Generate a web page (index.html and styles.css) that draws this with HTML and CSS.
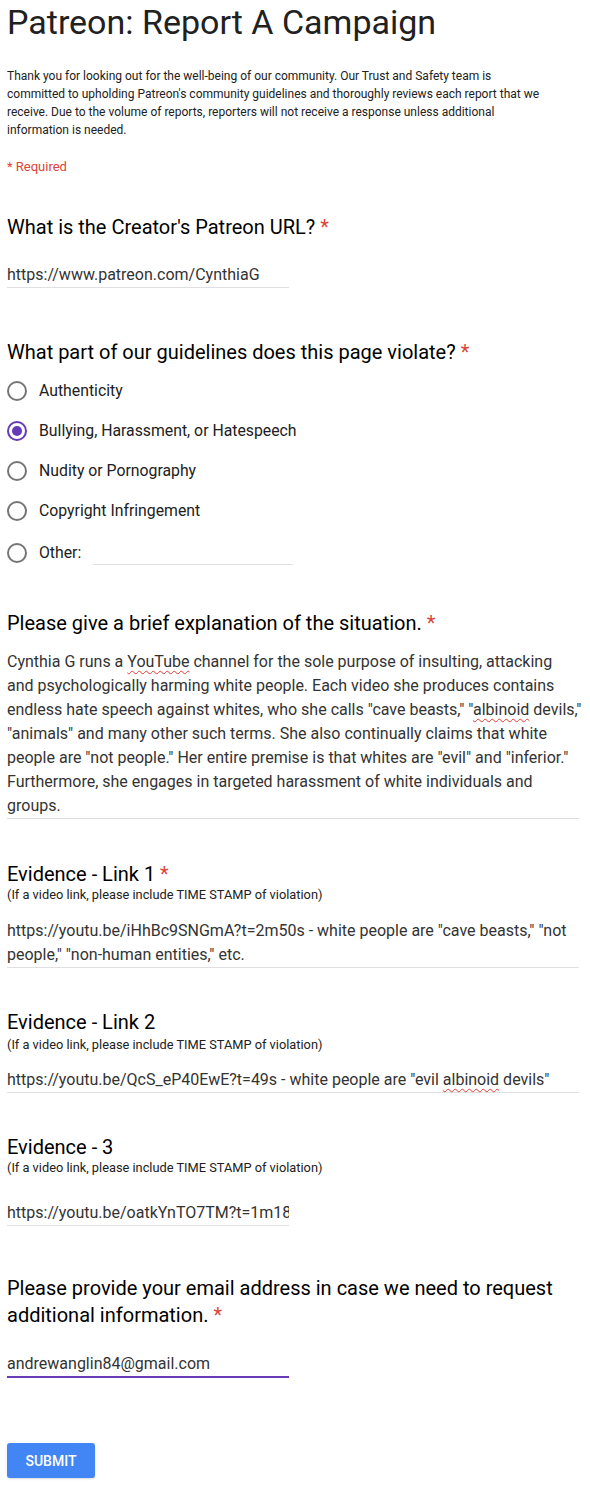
FILE: index.html
```html
<!DOCTYPE html>
<html>
<head>
<meta charset="utf-8">
<title>Patreon: Report A Campaign</title>
<link rel="stylesheet" href="styles.css">
</head>
<body>
<div class="form">
  <h1 class="title">Patreon: Report A Campaign</h1>
  <p class="desc">Thank you for looking out for the well-being of our community. Our Trust and Safety team is committed to upholding Patreon's community guidelines and thoroughly reviews each report that we receive. Due to the volume of reports, reporters will not receive a response unless additional information is needed.</p>
  <p class="required">* Required</p>

  <div class="q q1">
    <div class="qtitle">What is the Creator's Patreon URL? <span class="star">*</span></div>
    <div class="answer short">https://www.patreon.com/CynthiaG</div>
  </div>

  <div class="q q2">
    <div class="qtitle">What part of our guidelines does this page violate? <span class="star">*</span></div>
    <div class="options">
      <div class="opt"><span class="radio"></span><span class="label">Authenticity</span></div>
      <div class="opt"><span class="radio checked"></span><span class="label">Bullying, Harassment, or Hatespeech</span></div>
      <div class="opt"><span class="radio"></span><span class="label">Nudity or Pornography</span></div>
      <div class="opt"><span class="radio"></span><span class="label">Copyright Infringement</span></div>
      <div class="opt other"><span class="radio"></span><span class="label">Other:</span><span class="other-input"></span></div>
    </div>
  </div>

  <div class="q q3">
    <div class="qtitle">Please give a brief explanation of the situation. <span class="star">*</span></div>
    <div class="answer long"><div class="txt">Cynthia G runs a <span class="sp">YouTube</span> channel for the sole purpose of insulting, attacking<br>and psychologically harming white people. Each video she produces contains<br>endless hate speech against whites, who she calls "cave beasts," "<span class="sp">albinoid</span> devils,"<br>"animals" and many other such terms. She also continually claims that white<br>people are "not people." Her entire premise is that whites are "evil" and "inferior."<br>Furthermore, she engages in targeted harassment of white individuals and<br>groups.</div></div>
  </div>

  <div class="q q4">
    <div class="qtitle">Evidence - Link 1 <span class="star">*</span></div>
    <div class="help">(If a video link, please include TIME STAMP of violation)</div>
    <div class="answer long"><div class="txt">https://youtu.be/iHhBc9SNGmA?t=2m50s - white people are "cave beasts," "not people," "non-human entities," etc.</div></div>
  </div>

  <div class="q q5">
    <div class="qtitle">Evidence - Link 2</div>
    <div class="help">(If a video link, please include TIME STAMP of violation)</div>
    <div class="answer long"><div class="txt">https://youtu.be/QcS_eP40EwE?t=49s - white people are "evil <span class="sp">albinoid</span> devils"</div></div>
  </div>

  <div class="q q6">
    <div class="qtitle">Evidence - 3</div>
    <div class="help">(If a video link, please include TIME STAMP of violation)</div>
    <div class="answer short">https://youtu.be/oatkYnTO7TM?t=1m18s</div>
  </div>

  <div class="q q7">
    <div class="qtitle two">Please provide your email address in case we need to request additional information. <span class="star">*</span></div>
    <div class="answer short focused">andrewanglin84@gmail.com</div>
  </div>

  <button class="submit" type="button">SUBMIT</button>
</div>
</body>
</html>
```

FILE: styles.css
```css
html, body {
  margin: 0;
  padding: 0;
  background: #ffffff;
}
body {
  font-family: Roboto, "Liberation Sans", Arial, sans-serif;
  color: #212121;
}
.form {
  padding: 2px 11px 10px 7px;
}
.title {
  margin: 0;
  font-size: 34px;
  line-height: 40px;
  font-weight: 400;
  color: #212121;
}
.desc {
  margin: 25px 0 0;
  max-width: 540px;
  font-size: 12px;
  line-height: 18px;
  color: #212121;
}
.required {
  margin: 19px 0 0;
  font-size: 13px;
  line-height: 18px;
  color: #db4437;
}
.q {
  display: flex;
  flex-direction: column;
}
.qtitle {
  font-size: 20px;
  line-height: 24px;
  color: #000000;
}
.qtitle.two {
  line-height: 27px;
}
.star {
  color: #db4437;
}
.help {
  font-size: 12.8px;
  line-height: 18px;
  color: #212121;
}
.answer {
  font-size: 16px;
  line-height: 24px;
  color: #333333;
  border-bottom: 1px solid #e0e0e0;
}
.answer.short {
  width: 282px;
  padding-bottom: 0;
  white-space: nowrap;
  overflow: hidden;
}
.answer.focused {
  border-bottom: 2px solid #673ab7;
}
.answer.long {
  width: 572px;
}
.answer.long .txt {
  margin-right: -12px;
}
.sp {
  text-decoration: underline wavy #e53935;
  text-decoration-thickness: 1px;
  text-underline-offset: 3px;
}
.q1 { margin-top: 39px; }
.q1 .answer { margin-top: 24px; }
.q2 { margin-top: 52px; }
.options {
  margin-top: 7px;
  display: flex;
  flex-direction: column;
}
.opt {
  height: 40px;
  display: flex;
  align-items: center;
}
.opt.other {
  height: 44px;
}
.radio {
  box-sizing: border-box;
  width: 20px;
  height: 20px;
  border: 2px solid #757575;
  border-radius: 50%;
  display: flex;
  align-items: center;
  justify-content: center;
  flex: none;
}
.radio.checked {
  border-color: #673ab7;
}
.radio.checked::after {
  content: "";
  width: 10px;
  height: 10px;
  border-radius: 50%;
  background: #673ab7;
}
.label {
  margin-left: 12px;
  font-size: 15.8px;
  line-height: 24px;
  color: #212121;
}
.other-input {
  margin-left: 12px;
  width: 200px;
  height: 22px;
  border-bottom: 1px solid #e0e0e0;
}
.q3 { margin-top: 36px; }
.q3 .answer { margin-top: 15px; }
.q4 { margin-top: 43px; }
.q4 .answer { margin-top: 15px; }
.q5 { margin-top: 42px; }
.q5 .help { margin-top: 2px; }
.q5 .answer { margin-top: 14px; }
.q6 { margin-top: 42px; }
.q6 .answer { margin-top: 24px; }
.q7 { margin-top: 49px; }
.q7 .answer { margin-top: 23px; }
.submit {
  display: block;
  margin-top: 65px;
  width: 88px;
  height: 35px;
  border: none;
  border-radius: 3px;
  background: #4285f4;
  color: #ffffff;
  font-family: Roboto, "Liberation Sans", Arial, sans-serif;
  font-size: 14px;
  font-weight: 500;
  padding: 0;
  box-shadow: 0 1px 2px rgba(0,0,0,0.15);
}
```
